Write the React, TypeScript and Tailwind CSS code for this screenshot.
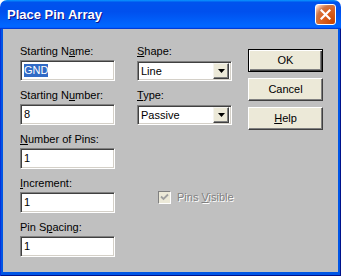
import React from "react";

const font = "font-['Liberation_Sans',Arial,sans-serif]";
const sunken =
  "border border-t-[#808080] border-l-[#808080] border-b-white border-r-white shadow-[inset_1px_1px_0_#404040,inset_-1px_-1px_0_#d4d0c8]";

function U({ children }: { children: React.ReactNode }) {
  return <span className="underline underline-offset-[1px]">{children}</span>;
}

function Field({ label, value, selected }: { label: React.ReactNode; value: string; selected?: boolean }) {
  return (
    <div className="flex flex-col">
      <div className="h-[13px] leading-[13px] mb-[2px]">{label}</div>
      <div className={`h-[21px] w-[95px] bg-white flex items-center px-[3px] ${sunken}`}>
        <span className={selected ? "bg-[#316ac5] text-white leading-[13px]" : "leading-[13px]"}>{value}</span>
      </div>
    </div>
  );
}

function Combo({ label, value }: { label: React.ReactNode; value: string }) {
  return (
    <div className="flex flex-col">
      <div className="h-[13px] leading-[13px] mb-[3px]">{label}</div>
      <div className={`h-[20px] w-[95px] bg-white flex items-center p-[2px] ${sunken}`}>
        <span className="flex-1 pl-[1px] leading-[13px]">{value}</span>
        <div className="h-[16px] w-[16px] bg-[#ece9d8] flex items-center justify-center border border-t-[#f4f3ee] border-l-[#f4f3ee] border-b-[#404040] border-r-[#404040] shadow-[inset_-1px_-1px_0_#808080]">
          <svg width="7" height="4" viewBox="0 0 7 4">
            <path d="M0 0h7L3.5 4z" fill="#000" />
          </svg>
        </div>
      </div>
    </div>
  );
}

function Btn({ children, def }: { children: React.ReactNode; def?: boolean }) {
  return (
    <div
      className={`h-[23px] w-[75px] bg-[#ece9d8] flex items-center justify-center ${
        def
          ? "border border-black shadow-[inset_1px_1px_0_#fff,inset_-1px_-1px_0_#404040,inset_-2px_-2px_0_#808080]"
          : "border border-t-white border-l-white border-b-[#404040] border-r-[#404040] shadow-[inset_-1px_-1px_0_#808080]"
      }`}
    >
      {children}
    </div>
  );
}

export default function App() {
  return (
    <div className={`w-[341px] h-[276px] flex flex-col ${font} text-[11px] text-black`}>
      <div className="h-[29px] rounded-t-[7px] bg-[linear-gradient(180deg,#0997ff,#0053ee_8%,#0050ee_40%,#0066ff_88%,#0066ff_93%,#005bff_95%,#003dd7_96%,#003dd7)] flex items-center pl-[7px] pr-[5px]">
        <span className="flex-1 text-white font-bold text-[13px] [text-shadow:1px_1px_#0f1089]">
          Place Pin Array
        </span>
        <div className="w-[21px] h-[21px] rounded-[3px] border border-white bg-[radial-gradient(circle_at_90%_90%,#cc4600,#dc6527_55%,#cd7546_70%,#ffccb2_90%,#fff)] flex items-center justify-center">
          <svg width="11" height="11" viewBox="0 0 11 11">
            <path d="M1.5 1.5l8 8M9.5 1.5l-8 8" stroke="#fff" strokeWidth="2.2" strokeLinecap="square" />
          </svg>
        </div>
      </div>
      <div className="flex-1 bg-[#0055e5] px-[3px] pb-[4px] shadow-[inset_1px_0_0_#0831d9,inset_-1px_0_0_#00138c,inset_0_-1px_0_#00138c]">
        <div className="h-full bg-[#c0c0c0] flex pl-[17px] pt-[16px]">
          <div className="flex flex-col gap-[8px] w-[95px]">
            <Field label={<>Starting N<U>a</U>me:</>} value="GND" selected />
            <Field label={<>Starting N<U>u</U>mber:</>} value="8" />
            <Field label={<><U>N</U>umber of Pins:</>} value="1" />
            <Field label={<><U>I</U>ncrement:</>} value="1" />
            <Field label={<>Pin S<U>p</U>acing:</>} value="1" />
          </div>
          <div className="flex flex-col ml-[22px] w-[95px]">
            <Combo label={<><U>S</U>hape:</>} value="Line" />
            <div className="mt-[8px]">
              <Combo label={<><U>T</U>ype:</>} value="Passive" />
            </div>
            <div className="flex items-center ml-[21px] mt-[64px] whitespace-nowrap">
              <div className="w-[13px] h-[13px] shrink-0 bg-[#ece9d8] border border-t-[#808080] border-l-[#808080] border-b-white border-r-white flex items-center justify-center">
                <svg width="9" height="9" viewBox="0 0 9 9">
                  <path d="M1 3.5l2.5 2.5L8 1.5" stroke="#a0a0a0" strokeWidth="1.8" fill="none" />
                </svg>
              </div>
              <span className="ml-[6px] text-[#808080] [text-shadow:1px_1px_#fff]">
                Pins <U>V</U>isible
              </span>
            </div>
          </div>
          <div className="flex flex-col gap-[6px] ml-[16px] mt-[4px]">
            <Btn def>OK</Btn>
            <Btn>Cancel</Btn>
            <Btn>
              <span>
                <U>H</U>elp
              </span>
            </Btn>
          </div>
        </div>
      </div>
    </div>
  );
}
